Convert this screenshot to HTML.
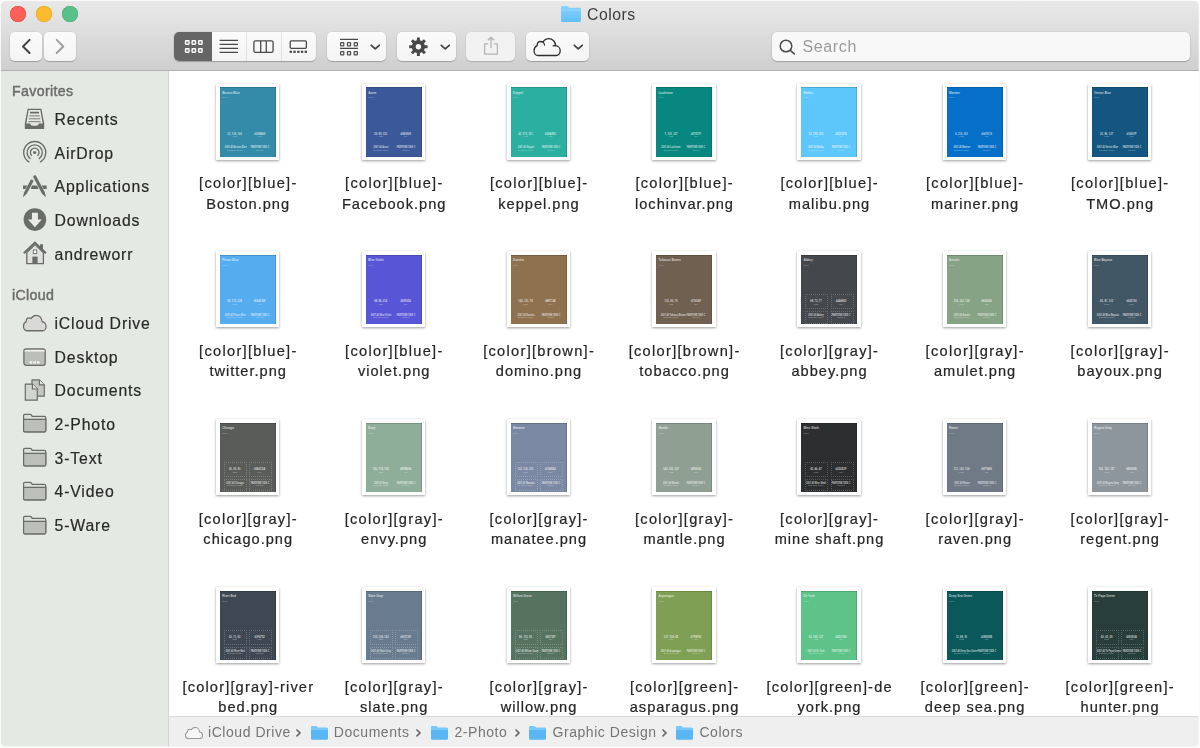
<!DOCTYPE html>
<html lang="en">
<head>
<meta charset="utf-8">
<title>Colors</title>
<style>
*{box-sizing:border-box;margin:0;padding:0}
html,body{width:1200px;height:748px;overflow:hidden;background:#fbfbfb;font-family:"Liberation Sans",sans-serif;color:#2a2a2a}
#win{position:absolute;left:0;top:0;width:1200px;height:748px;overflow:hidden;background:#fff;clip-path:inset(.9px 1.3px 1.5px .9px round 4.5px)}
#tb{position:absolute;left:0;top:0;width:1200px;height:71px;background:linear-gradient(#e8e8e8 1px,#e1e1e1 22px,#cfcfcf 70px);border-bottom:1px solid #b1b1b1}
.tl{position:absolute;top:5.8px;width:16px;height:16px;border-radius:50%}
.btn{position:absolute;top:32px;height:29px;border-radius:5px;background:linear-gradient(#fbfbfb,#f4f4f4);box-shadow:0 1px 1px rgba(0,0,0,.22),0 0 0 .5px rgba(0,0,0,.07)}
.btn svg{position:absolute;left:0;top:0}
#title{position:absolute;left:587px;top:5.2px;font-size:15.8px;line-height:20px;letter-spacing:.5px;color:#3c3c3c}
#search{position:absolute;left:772px;top:32px;width:418px;height:29px;border-radius:5px;background:#f8f8f8;box-shadow:0 1px 1px rgba(0,0,0,.2),0 0 0 .5px rgba(0,0,0,.08)}
#search span{position:absolute;left:30.6px;top:5.4px;font-size:16px;line-height:20px;color:#9a9a9a;letter-spacing:.6px}
#sb{position:absolute;left:0;top:71px;width:169px;height:677px;background:#e5e9e3;border-right:1px solid #d3d5d1}
.sh{position:absolute;left:12px;font-size:14.2px;line-height:16px;color:#6c6c6c;-webkit-text-stroke:.45px #6c6c6c;letter-spacing:.35px}
.si{position:absolute;left:54.5px;font-size:15.8px;line-height:20px;color:#2a2a2a;letter-spacing:.85px;margin-top:.9px;-webkit-text-stroke:.2px #2a2a2a;white-space:nowrap}
.ic{position:absolute;left:22px;width:26px;height:26px}
#main{position:absolute;left:169px;top:71px;width:1031px;height:645px;background:#fff;overflow:hidden}
#cells{position:absolute;left:-169px;top:-71px}
.cell{position:absolute;width:145px;height:140px}
.fr{position:absolute;left:40.75px;top:0;width:63.5px;height:76px;background:#fff;box-shadow:0 1px 2.5px rgba(0,0,0,.38),0 0 .5px rgba(0,0,0,.3)}
.sw{position:absolute;left:3.75px;top:3.5px;width:56.25px;height:69.5px;overflow:hidden;box-shadow:inset 0 .6px 0 rgba(0,0,0,.3),inset -.6px 0 0 rgba(0,0,0,.22);color:rgba(255,255,255,.7);font-size:2.6px;line-height:3px;white-space:nowrap}
.sw span{position:absolute}
.sw i{position:absolute;width:23px;height:15px;border:.6px dotted rgba(255,255,255,.2)}
.sw .t1{left:2.5px;top:4.5px;font-size:3px;font-weight:bold}
.sw .t2{left:2.5px;top:9px;font-size:2.2px;opacity:.7}
.sw .v{top:45.5px;font-weight:bold;width:24px;text-align:center}
.sw .k{top:47.8px;font-size:2.1px;opacity:.75;width:24px;text-align:center}
.sw .a{left:3px}.sw .b{left:28px}
.sw .v.c{top:59.3px;transform:scaleX(.86)}.sw .k.c{top:61.6px}
.lb{position:absolute;left:-10px;top:89.5px;width:165px;text-align:center;font-size:14.6px;line-height:20.4px;color:#262626;-webkit-text-stroke:.22px #262626;white-space:nowrap}
.l1{letter-spacing:1.3px;margin-right:-1.3px}
.l2{letter-spacing:1px;margin-right:-1px}
#pb{position:absolute;left:169px;top:716px;width:1031px;height:32px;background:#efefef;border-top:1px solid #d9d9d9}
#pb span{position:absolute;top:7px;font-size:14px;line-height:16px;color:#757575;letter-spacing:.55px;white-space:nowrap}
#pb i{position:absolute;top:7px;font-style:normal;font-weight:bold;font-size:13px;line-height:16px;color:#6a6a6a}
#pb svg{position:absolute}
.sh,.si,.lb,#title,#search span,#pb span{will-change:opacity}
</style>
</head>
<body>
<div id="win">
<div id="tb">
<div class="tl" style="left:10px;background:#fc5f57;box-shadow:inset 0 0 0 .5px #df4a43"></div>
<div class="tl" style="left:36px;background:#fdbc2e;box-shadow:inset 0 0 0 .5px #dea123"></div>
<div class="tl" style="left:62px;background:#5ac08a;box-shadow:inset 0 0 0 .5px #4aa873"></div>
<svg style="position:absolute;left:561px;top:6px" width="20" height="16" viewBox="0 0 20 16"><defs><linearGradient id="fg" x1="0" y1="0" x2="0" y2="1"><stop offset="0" stop-color="#86d2fb"/><stop offset="1" stop-color="#62bff6"/></linearGradient></defs><path d="M0 1.4Q0 0 1.4 0H5.8Q6.8 0 7.4 .9L8 1.8H18.6Q20 1.8 20 3.2V14.6Q20 16 18.6 16H1.4Q0 16 0 14.6Z" fill="url(#fg)"/><path d="M0 4.2H20" stroke="#9adafc" stroke-width=".8"/></svg>
<div id="title">Colors</div>
<div class="btn" style="left:10px;width:32px"><svg width="32" height="29" viewBox="0 0 32 29"><path d="M19.6 7.9 L13 14.45 L19.6 21" fill="none" stroke="#404040" stroke-width="2" stroke-linecap="round" stroke-linejoin="round"/></svg></div>
<div class="btn" style="left:44px;width:32px"><svg width="32" height="29" viewBox="0 0 32 29"><path d="M12.7 7.9 L19.3 14.45 L12.7 21" fill="none" stroke="#a0a0a0" stroke-width="2" stroke-linecap="round" stroke-linejoin="round"/></svg></div>
<div class="btn" style="left:174px;width:142px;overflow:hidden"><div style="position:absolute;left:0;top:0;width:37.7px;height:29px;background:#656565"></div><div style="position:absolute;left:72.2px;top:0;width:1px;height:29px;background:#e2e2e2"></div><div style="position:absolute;left:106.6px;top:0;width:1px;height:29px;background:#e2e2e2"></div><svg width="142" height="29" viewBox="0 0 142 29"><rect x="11.55" y="8.75" width="3.40" height="3.40" rx=".6" fill="none" stroke="#fff" stroke-width="1.5"/><rect x="18.10" y="8.75" width="3.40" height="3.40" rx=".6" fill="none" stroke="#fff" stroke-width="1.5"/><rect x="24.65" y="8.75" width="3.40" height="3.40" rx=".6" fill="none" stroke="#fff" stroke-width="1.5"/><rect x="11.55" y="16.75" width="3.40" height="3.40" rx=".6" fill="none" stroke="#fff" stroke-width="1.5"/><rect x="18.10" y="16.75" width="3.40" height="3.40" rx=".6" fill="none" stroke="#fff" stroke-width="1.5"/><rect x="24.65" y="16.75" width="3.40" height="3.40" rx=".6" fill="none" stroke="#fff" stroke-width="1.5"/><path d="M45.6 8.4H64" stroke="#4a4a4a" stroke-width="1.2"/><path d="M45.6 12.4H64" stroke="#4a4a4a" stroke-width="1.2"/><path d="M45.6 16.4H64" stroke="#4a4a4a" stroke-width="1.2"/><path d="M45.6 20.4H64" stroke="#4a4a4a" stroke-width="1.2"/><rect x="79.9" y="8.9" width="19.2" height="11.4" rx="1.6" fill="none" stroke="#4a4a4a" stroke-width="1.3"/><path d="M86.7 9V20M92.3 9V20" stroke="#4a4a4a" stroke-width="1.3"/><rect x="116.2" y="8.9" width="16.2" height="7.4" rx="1" fill="none" stroke="#4a4a4a" stroke-width="1.3"/><rect x="115.60" y="18.7" width="2.4" height="2.2" fill="#4a4a4a"/><rect x="119.35" y="18.7" width="2.4" height="2.2" fill="#4a4a4a"/><rect x="123.10" y="18.7" width="2.4" height="2.2" fill="#4a4a4a"/><rect x="126.85" y="18.7" width="2.4" height="2.2" fill="#4a4a4a"/><rect x="130.60" y="18.7" width="2.4" height="2.2" fill="#4a4a4a"/></svg></div>
<div class="btn" style="left:327px;width:59px"><svg width="40" height="29" viewBox="0 0 40 29"><path d="M13 7.4H31M13 16.4H31" stroke="#4a4a4a" stroke-width="1.2"/><rect x="13.60" y="10.60" width="3.20" height="3.20" rx=".6" fill="none" stroke="#4a4a4a" stroke-width="1.2"/><rect x="20.40" y="10.60" width="3.20" height="3.20" rx=".6" fill="none" stroke="#4a4a4a" stroke-width="1.2"/><rect x="27.20" y="10.60" width="3.20" height="3.20" rx=".6" fill="none" stroke="#4a4a4a" stroke-width="1.2"/><rect x="13.60" y="19.60" width="3.20" height="3.20" rx=".6" fill="none" stroke="#4a4a4a" stroke-width="1.2"/><rect x="20.40" y="19.60" width="3.20" height="3.20" rx=".6" fill="none" stroke="#4a4a4a" stroke-width="1.2"/><rect x="27.20" y="19.60" width="3.20" height="3.20" rx=".6" fill="none" stroke="#4a4a4a" stroke-width="1.2"/></svg><svg width="12" height="8" style="left:42.5px;top:12px" viewBox="0 0 12 8"><path d="M1.3 1.3 L5.25 4.9 L9.2 1.3" fill="none" stroke="#454545" stroke-width="1.8" stroke-linecap="round" stroke-linejoin="round"/></svg></div>
<div class="btn" style="left:397px;width:59px"><svg width="40" height="29" viewBox="0 0 40 29"><path fill-rule="evenodd" fill="#484848" d="M19.86 8.28 L19.95 5.51 L22.85 5.51 L22.94 8.28 L24.85 9.07 L26.87 7.18 L28.92 9.23 L27.03 11.25 L27.82 13.16 L30.59 13.25 L30.59 16.15 L27.82 16.24 L27.03 18.15 L28.92 20.17 L26.87 22.22 L24.85 20.33 L22.94 21.12 L22.85 23.89 L19.95 23.89 L19.86 21.12 L17.95 20.33 L15.93 22.22 L13.88 20.17 L15.77 18.15 L14.98 16.24 L12.21 16.15 L12.21 13.25 L14.98 13.16 L15.77 11.25 L13.88 9.23 L15.93 7.18 L17.95 9.07Z M24.10 14.70 A2.7 2.7 0 1 0 18.70 14.70 A2.7 2.7 0 1 0 24.10 14.70Z"/></svg><svg width="12" height="8" style="left:42.8px;top:12px" viewBox="0 0 12 8"><path d="M1.3 1.3 L5.25 4.9 L9.2 1.3" fill="none" stroke="#454545" stroke-width="1.8" stroke-linecap="round" stroke-linejoin="round"/></svg></div>
<div class="btn" style="left:466px;width:49px;background:#f2f2f2;box-shadow:0 1px 1px rgba(0,0,0,.15),0 0 0 .5px rgba(0,0,0,.05)"><svg width="49" height="29" viewBox="0 0 49 29"><path d="M22.2 11.9H18.6V22.1H31.4V11.9H27.8" fill="none" stroke="#b4b4b4" stroke-width="1.3"/><path d="M25 16.2V5.4M21.9 8.3L25 5.2L28.1 8.3" fill="none" stroke="#b4b4b4" stroke-width="1.3"/></svg></div>
<div class="btn" style="left:526px;width:63px"><svg width="44" height="29" viewBox="0 0 44 29"><g transform="translate(7.4,6) scale(.957,.95)"><path d="M4.9 18.4C2.3 18.4 .7 15.9 .7 13.3C.7 10.9 2.1 8.9 3.9 8C3.9 5.7 5.3 3.7 7.5 3.7C8.5 3.7 9.4 3.9 10.1 4.3C11.3 2.1 13.5 .7 16.2 .7C20 .7 23.1 3.9 23.2 8.1C25.9 8.3 28 10.7 28 13.4C28 16.1 26.2 18.4 23.8 18.4Z" fill="none" stroke="#303030" stroke-width="1.4" stroke-linejoin="round"/><path d="M10.1 4.3C10.9 5.1 11.5 6.3 11.7 7.5M23.2 8.1C22.3 8 21.4 8.1 20.6 8.3" fill="none" stroke="#303030" stroke-width="1.2" stroke-linecap="round"/></g></svg><svg width="12" height="8" style="left:46.8px;top:12px" viewBox="0 0 12 8"><path d="M1.3 1.3 L5.25 4.9 L9.2 1.3" fill="none" stroke="#454545" stroke-width="1.8" stroke-linecap="round" stroke-linejoin="round"/></svg></div>
<div id="search"><svg style="position:absolute;left:6px;top:6px" width="20" height="20" viewBox="0 0 20 20"><circle cx="8" cy="8" r="5.8" fill="none" stroke="#4c4c4c" stroke-width="1.5"/><path d="M12.3 12.4L16.3 15.9" stroke="#4c4c4c" stroke-width="1.6" stroke-linecap="round"/></svg><span>Search</span></div>
</div>
<div id="sb">
<div class="sh" style="top:11.5px">Favorites</div>
<div class="si" style="top:38.3px">Recents</div>
<div class="si" style="top:71.9px">AirDrop</div>
<div class="si" style="top:105.5px">Applications</div>
<div class="si" style="top:139.1px">Downloads</div>
<div class="si" style="top:172.7px">andreworr</div>
<div class="sh" style="top:216px">iCloud</div>
<div class="si" style="top:242.3px">iCloud Drive</div>
<div class="si" style="top:275.9px">Desktop</div>
<div class="si" style="top:309.5px">Documents</div>
<div class="si" style="top:343.1px">2-Photo</div>
<div class="si" style="top:376.7px">3-Text</div>
<div class="si" style="top:410.3px">4-Video</div>
<div class="si" style="top:443.9px">5-Ware</div>
<svg class="ic" style="top:34.5px" viewBox="0 0 26 26"><path d="M5.6 2.8H19.4L22.2 17.4V22.2Q22.2 23.1 21.3 23.1H3.7Q2.8 23.1 2.8 22.2V17.4Z" fill="#6a6c69"/><path d="M6.7 4H18.3L20.7 17.5H16.8Q16.4 19.7 14.2 19.7H10.8Q8.6 19.7 8.2 17.5H4.3Z" fill="#e6e8e5"/><path d="M8 6.6H17" stroke="#6a6c69" stroke-width="1.6"/><path d="M7.2 9.9H17.8M6.8 12.8H18.2M6.4 15.7H18.6" stroke="#6a6c69" stroke-width=".9"/></svg>
<svg class="ic" style="top:68.4px" viewBox="0 0 26 26"><path d="M7.37 23.12A11 11 0 1 1 18.03 23.12 M8.56 19.87A7.6 7.6 0 1 1 16.84 19.87 M9.94 16.79A4.3 4.3 0 1 1 15.46 16.79" fill="none" stroke="#6a6c69" stroke-width="1.35"/><circle cx="12.7" cy="13.5" r="1.6" fill="#6a6c69"/></svg>
<svg class="ic" style="top:101.5px" viewBox="0 0 26 26"><path d="M11.1 3.8Q11.6 2 13.8 2.4L22.7 18.9L24 24.5L19.9 20.4Z" fill="#6a6c69"/><path d="M8.9 6.6Q10.6 5.8 11.6 8L4.7 20.8L.9 24.4L2 19.4Z" fill="#6a6c69"/><path d="M1 12.5H5.3L3.4 16.1H1ZM9.9 12.5H15.2L16.5 16.1H8.8ZM19.6 12.5H24.7V16.1H21.5Z" fill="#6a6c69"/></svg>
<svg class="ic" style="top:135.4px" viewBox="0 0 26 26"><circle cx="12.9" cy="13.6" r="11.3" fill="#6a6c69"/><path d="M9.9 6.8H15.9V13.4H19.8L12.9 21.2L6 13.4H9.9Z" fill="#e9ece7"/></svg>
<svg class="ic" style="top:168.5px" viewBox="0 0 26 26"><path d="M4.8 12.6V23.6H21.4V12.6L13 4.6Z" fill="#dfe1de" stroke="#6a6c69" stroke-width="1.3"/><path d="M1.8 13.2L12.9 2.6L24 13.2" fill="none" stroke="#6a6c69" stroke-width="2" stroke-linejoin="miter"/><path d="M18 4.2H21V10L18 7.4Z" fill="#6a6c69"/><rect x="10.4" y="16.6" width="5.2" height="7" fill="#6a6c69"/><rect x="11.3" y="10" width="3.4" height="3.6" fill="#fff" stroke="#6a6c69" stroke-width=".9"/></svg>
<svg class="ic" style="top:238.5px" viewBox="0 0 26 26"><g transform="translate(.9,4.7) scale(.828,.872)"><path d="M4.9 18.4C2.3 18.4 .7 15.9 .7 13.3C.7 10.9 2.1 8.9 3.9 8C3.9 5.7 5.3 3.7 7.5 3.7C8.5 3.7 9.4 3.9 10.1 4.3C11.3 2.1 13.5 .7 16.2 .7C20 .7 23.1 3.9 23.2 8.1C25.9 8.3 28 10.7 28 13.4C28 16.1 26.2 18.4 23.8 18.4Z" fill="#d9dad8" stroke="#6a6c69" stroke-width="1.5" stroke-linejoin="round"/></g></svg>
<svg class="ic" style="top:272.5px" viewBox="0 0 26 26"><rect x="1.9" y="4.9" width="21.3" height="16.4" rx="2.2" fill="#bcbeba" stroke="#6a6c69" stroke-width="1.3"/><path d="M2.6 6.7H22.6" stroke="#f1f2f0" stroke-width="1.6"/><rect x="7.6" y="17.2" width="2.6" height="2.4" fill="#f1f2f0"/><rect x="11.3" y="17.2" width="2.6" height="2.4" fill="#f1f2f0"/><rect x="15" y="17.2" width="2.6" height="2.4" fill="#f1f2f0"/></svg>
<svg class="ic" style="top:306.0px" viewBox="0 0 26 26"><path d="M10 2.9H17.4L22.3 7.8V19.1H10Z" fill="#c3c5c1" stroke="#6a6c69" stroke-width="1.2" stroke-linejoin="round"/><path d="M17.4 2.9V7.8H22.3" fill="#dfe1de" stroke="#6a6c69" stroke-width="1.2" stroke-linejoin="round"/><path d="M3.3 7.1H10.4L15.3 12V23.2H3.3Z" fill="#d3d5d1" stroke="#6a6c69" stroke-width="1.2" stroke-linejoin="round"/><path d="M10.4 7.1V12H15.3" fill="#e6e8e5" stroke="#6a6c69" stroke-width="1.2" stroke-linejoin="round"/></svg>
<svg class="ic" style="top:339.3px" viewBox="0 0 26 26"><path d="M1.6 5.6Q1.6 4.3 2.9 4.3H8.2Q9 4.3 9.5 5.1L10.2 6.4H22.5Q23.8 6.4 23.8 7.7V20.5Q23.8 21.8 22.5 21.8H2.9Q1.6 21.8 1.6 20.5Z" fill="#dcdedb" stroke="#6a6c69" stroke-width="1.2"/><path d="M1.6 9.3H23.8V20.5Q23.8 21.8 22.5 21.8H2.9Q1.6 21.8 1.6 20.5Z" fill="#bdbfbb" stroke="#6a6c69" stroke-width="1.2"/></svg>
<svg class="ic" style="top:373.3px" viewBox="0 0 26 26"><path d="M1.6 5.6Q1.6 4.3 2.9 4.3H8.2Q9 4.3 9.5 5.1L10.2 6.4H22.5Q23.8 6.4 23.8 7.7V20.5Q23.8 21.8 22.5 21.8H2.9Q1.6 21.8 1.6 20.5Z" fill="#dcdedb" stroke="#6a6c69" stroke-width="1.2"/><path d="M1.6 9.3H23.8V20.5Q23.8 21.8 22.5 21.8H2.9Q1.6 21.8 1.6 20.5Z" fill="#bdbfbb" stroke="#6a6c69" stroke-width="1.2"/></svg>
<svg class="ic" style="top:406.6px" viewBox="0 0 26 26"><path d="M1.6 5.6Q1.6 4.3 2.9 4.3H8.2Q9 4.3 9.5 5.1L10.2 6.4H22.5Q23.8 6.4 23.8 7.7V20.5Q23.8 21.8 22.5 21.8H2.9Q1.6 21.8 1.6 20.5Z" fill="#dcdedb" stroke="#6a6c69" stroke-width="1.2"/><path d="M1.6 9.3H23.8V20.5Q23.8 21.8 22.5 21.8H2.9Q1.6 21.8 1.6 20.5Z" fill="#bdbfbb" stroke="#6a6c69" stroke-width="1.2"/></svg>
<svg class="ic" style="top:440.6px" viewBox="0 0 26 26"><path d="M1.6 5.6Q1.6 4.3 2.9 4.3H8.2Q9 4.3 9.5 5.1L10.2 6.4H22.5Q23.8 6.4 23.8 7.7V20.5Q23.8 21.8 22.5 21.8H2.9Q1.6 21.8 1.6 20.5Z" fill="#dcdedb" stroke="#6a6c69" stroke-width="1.2"/><path d="M1.6 9.3H23.8V20.5Q23.8 21.8 22.5 21.8H2.9Q1.6 21.8 1.6 20.5Z" fill="#bdbfbb" stroke="#6a6c69" stroke-width="1.2"/></svg>
</div>
<div id="main"><div id="cells">
<div class="cell" style="left:175.20px;top:83.60px">
<div class="fr"><div class="sw" style="background:#338BA9"><span class="t1">Boston Blue</span><span class="t2">Color</span><span class="v a">51, 139, 169</span><span class="k a">RGB</span><span class="v b">#338BA9</span><span class="k b">HEX</span><span class="v c a">2067-40 Boston Blue</span><span class="k c a">Benjamin Moore</span><span class="v c b">PANTONE 7459 C</span><span class="k c b">Pantone</span></div></div>
<div class="lb"><span class="l1">[color][blue]-</span><br><span class="l2">Boston.png</span></div>
</div>
<div class="cell" style="left:321.20px;top:83.60px">
<div class="fr"><div class="sw" style="background:#3B5998"><span class="t1">Azure</span><span class="t2">Color</span><span class="v a">59, 89, 152</span><span class="k a">RGB</span><span class="v b">#3B5998</span><span class="k b">HEX</span><span class="v c a">2067-40 Azure</span><span class="k c a">Benjamin Moore</span><span class="v c b">PANTONE 7459 C</span><span class="k c b">Pantone</span></div></div>
<div class="lb"><span class="l1">[color][blue]-</span><br><span class="l2">Facebook.png</span></div>
</div>
<div class="cell" style="left:466.00px;top:83.60px">
<div class="fr"><div class="sw" style="background:#2AAFA1"><span class="t1">Keppel</span><span class="t2">Color</span><span class="v a">42, 175, 161</span><span class="k a">RGB</span><span class="v b">#2AAFA1</span><span class="k b">HEX</span><span class="v c a">2067-40 Keppel</span><span class="k c a">Benjamin Moore</span><span class="v c b">PANTONE 7459 C</span><span class="k c b">Pantone</span></div></div>
<div class="lb"><span class="l1">[color][blue]-</span><br><span class="l2">keppel.png</span></div>
</div>
<div class="cell" style="left:611.50px;top:83.60px">
<div class="fr"><div class="sw" style="background:#07877F"><span class="t1">Lochinvar</span><span class="t2">Color</span><span class="v a">7, 135, 127</span><span class="k a">RGB</span><span class="v b">#07877F</span><span class="k b">HEX</span><span class="v c a">2067-40 Lochinvar</span><span class="k c a">Benjamin Moore</span><span class="v c b">PANTONE 7459 C</span><span class="k c b">Pantone</span></div></div>
<div class="lb"><span class="l1">[color][blue]-</span><br><span class="l2">lochinvar.png</span></div>
</div>
<div class="cell" style="left:756.50px;top:83.60px">
<div class="fr"><div class="sw" style="background:#5DC6FA"><span class="t1">Malibu</span><span class="t2">Color</span><span class="v a">93, 198, 250</span><span class="k a">RGB</span><span class="v b">#5DC6FA</span><span class="k b">HEX</span><span class="v c a">2067-40 Malibu</span><span class="k c a">Benjamin Moore</span><span class="v c b">PANTONE 7459 C</span><span class="k c b">Pantone</span></div></div>
<div class="lb"><span class="l1">[color][blue]-</span><br><span class="l2">malibu.png</span></div>
</div>
<div class="cell" style="left:902.10px;top:83.60px">
<div class="fr"><div class="sw" style="background:#0670C9"><span class="t1">Mariner</span><span class="t2">Color</span><span class="v a">6, 112, 201</span><span class="k a">RGB</span><span class="v b">#0670C9</span><span class="k b">HEX</span><span class="v c a">2067-40 Mariner</span><span class="k c a">Benjamin Moore</span><span class="v c b">PANTONE 7459 C</span><span class="k c b">Pantone</span></div></div>
<div class="lb"><span class="l1">[color][blue]-</span><br><span class="l2">mariner.png</span></div>
</div>
<div class="cell" style="left:1047.10px;top:83.60px">
<div class="fr"><div class="sw" style="background:#14567F"><span class="t1">Venice Blue</span><span class="t2">Color</span><span class="v a">20, 86, 127</span><span class="k a">RGB</span><span class="v b">#14567F</span><span class="k b">HEX</span><span class="v c a">2067-40 Venice Blue</span><span class="k c a">Benjamin Moore</span><span class="v c b">PANTONE 7459 C</span><span class="k c b">Pantone</span></div></div>
<div class="lb"><span class="l1">[color][blue]-</span><br><span class="l2">TMO.png</span></div>
</div>
<div class="cell" style="left:175.20px;top:251.40px">
<div class="fr"><div class="sw" style="background:#55ACEE"><span class="t1">Picton Blue</span><span class="t2">Color</span><span class="v a">85, 172, 238</span><span class="k a">RGB</span><span class="v b">#55ACEE</span><span class="k b">HEX</span><span class="v c a">2067-40 Picton Blue</span><span class="k c a">Benjamin Moore</span><span class="v c b">PANTONE 7459 C</span><span class="k c b">Pantone</span></div></div>
<div class="lb"><span class="l1">[color][blue]-</span><br><span class="l2">twitter.png</span></div>
</div>
<div class="cell" style="left:321.20px;top:251.40px">
<div class="fr"><div class="sw" style="background:#5856D6"><span class="t1">Blue Violet</span><span class="t2">Color</span><span class="v a">88, 86, 214</span><span class="k a">RGB</span><span class="v b">#5856D6</span><span class="k b">HEX</span><span class="v c a">2067-40 Blue Violet</span><span class="k c a">Benjamin Moore</span><span class="v c b">PANTONE 7459 C</span><span class="k c b">Pantone</span></div></div>
<div class="lb"><span class="l1">[color][blue]-</span><br><span class="l2">violet.png</span></div>
</div>
<div class="cell" style="left:466.00px;top:251.40px">
<div class="fr"><div class="sw" style="background:#8E714E"><span class="t1">Domino</span><span class="t2">Color</span><span class="v a">142, 113, 78</span><span class="k a">RGB</span><span class="v b">#8E714E</span><span class="k b">HEX</span><span class="v c a">2067-40 Domino</span><span class="k c a">Benjamin Moore</span><span class="v c b">PANTONE 7459 C</span><span class="k c b">Pantone</span></div></div>
<div class="lb"><span class="l1">[color][brown]-</span><br><span class="l2">domino.png</span></div>
</div>
<div class="cell" style="left:611.50px;top:251.40px">
<div class="fr"><div class="sw" style="background:#70604F"><span class="t1">Tobacco Brown</span><span class="t2">Color</span><span class="v a">112, 96, 79</span><span class="k a">RGB</span><span class="v b">#70604F</span><span class="k b">HEX</span><span class="v c a">2067-40 Tobacco Brown</span><span class="k c a">Benjamin Moore</span><span class="v c b">PANTONE 7459 C</span><span class="k c b">Pantone</span></div></div>
<div class="lb"><span class="l1">[color][brown]-</span><br><span class="l2">tobacco.png</span></div>
</div>
<div class="cell" style="left:756.50px;top:251.40px">
<div class="fr"><div class="sw" style="background:#44484D"><span class="t1">Abbey</span><span class="t2">Color</span><span class="v a">68, 72, 77</span><span class="k a">RGB</span><span class="v b">#44484D</span><span class="k b">HEX</span><span class="v c a">2067-40 Abbey</span><span class="k c a">Benjamin Moore</span><span class="v c b">PANTONE 7459 C</span><span class="k c b">Pantone</span><i style="left:4.2px;top:39.5px"></i><i style="left:29.7px;top:39.5px"></i><i style="left:4.2px;top:56.2px;height:12.5px"></i><i style="left:29.7px;top:56.2px;height:12.5px"></i></div></div>
<div class="lb"><span class="l1">[color][gray]-</span><br><span class="l2">abbey.png</span></div>
</div>
<div class="cell" style="left:902.10px;top:251.40px">
<div class="fr"><div class="sw" style="background:#86A386"><span class="t1">Amulet</span><span class="t2">Color</span><span class="v a">134, 163, 134</span><span class="k a">RGB</span><span class="v b">#86A386</span><span class="k b">HEX</span><span class="v c a">2067-40 Amulet</span><span class="k c a">Benjamin Moore</span><span class="v c b">PANTONE 7459 C</span><span class="k c b">Pantone</span></div></div>
<div class="lb"><span class="l1">[color][gray]-</span><br><span class="l2">amulet.png</span></div>
</div>
<div class="cell" style="left:1047.10px;top:251.40px">
<div class="fr"><div class="sw" style="background:#425766"><span class="t1">Blue Bayoux</span><span class="t2">Color</span><span class="v a">66, 87, 102</span><span class="k a">RGB</span><span class="v b">#425766</span><span class="k b">HEX</span><span class="v c a">2067-40 Blue Bayoux</span><span class="k c a">Benjamin Moore</span><span class="v c b">PANTONE 7459 C</span><span class="k c b">Pantone</span></div></div>
<div class="lb"><span class="l1">[color][gray]-</span><br><span class="l2">bayoux.png</span></div>
</div>
<div class="cell" style="left:175.20px;top:419.30px">
<div class="fr"><div class="sw" style="background:#5A5C5A"><span class="t1">Chicago</span><span class="t2">Color</span><span class="v a">90, 92, 90</span><span class="k a">RGB</span><span class="v b">#5A5C5A</span><span class="k b">HEX</span><span class="v c a">2067-40 Chicago</span><span class="k c a">Benjamin Moore</span><span class="v c b">PANTONE 7459 C</span><span class="k c b">Pantone</span><i style="left:4.2px;top:39.5px"></i><i style="left:29.7px;top:39.5px"></i><i style="left:4.2px;top:56.2px;height:12.5px"></i><i style="left:29.7px;top:56.2px;height:12.5px"></i></div></div>
<div class="lb"><span class="l1">[color][gray]-</span><br><span class="l2">chicago.png</span></div>
</div>
<div class="cell" style="left:321.20px;top:419.30px">
<div class="fr"><div class="sw" style="background:#8FAE9A"><span class="t1">Envy</span><span class="t2">Color</span><span class="v a">143, 174, 154</span><span class="k a">RGB</span><span class="v b">#8FAE9A</span><span class="k b">HEX</span><span class="v c a">2067-40 Envy</span><span class="k c a">Benjamin Moore</span><span class="v c b">PANTONE 7459 C</span><span class="k c b">Pantone</span></div></div>
<div class="lb"><span class="l1">[color][gray]-</span><br><span class="l2">envy.png</span></div>
</div>
<div class="cell" style="left:466.00px;top:419.30px">
<div class="fr"><div class="sw" style="background:#7A88A3"><span class="t1">Manatee</span><span class="t2">Color</span><span class="v a">122, 136, 163</span><span class="k a">RGB</span><span class="v b">#7A88A3</span><span class="k b">HEX</span><span class="v c a">2067-40 Manatee</span><span class="k c a">Benjamin Moore</span><span class="v c b">PANTONE 7459 C</span><span class="k c b">Pantone</span><i style="left:4.2px;top:39.5px"></i><i style="left:29.7px;top:39.5px"></i><i style="left:4.2px;top:56.2px;height:12.5px"></i><i style="left:29.7px;top:56.2px;height:12.5px"></i></div></div>
<div class="lb"><span class="l1">[color][gray]-</span><br><span class="l2">manatee.png</span></div>
</div>
<div class="cell" style="left:611.50px;top:419.30px">
<div class="fr"><div class="sw" style="background:#8FA093"><span class="t1">Mantle</span><span class="t2">Color</span><span class="v a">143, 160, 147</span><span class="k a">RGB</span><span class="v b">#8FA093</span><span class="k b">HEX</span><span class="v c a">2067-40 Mantle</span><span class="k c a">Benjamin Moore</span><span class="v c b">PANTONE 7459 C</span><span class="k c b">Pantone</span></div></div>
<div class="lb"><span class="l1">[color][gray]-</span><br><span class="l2">mantle.png</span></div>
</div>
<div class="cell" style="left:756.50px;top:419.30px">
<div class="fr"><div class="sw" style="background:#2D2E2F"><span class="t1">Mine Shaft</span><span class="t2">Color</span><span class="v a">45, 46, 47</span><span class="k a">RGB</span><span class="v b">#2D2E2F</span><span class="k b">HEX</span><span class="v c a">2067-40 Mine Shaft</span><span class="k c a">Benjamin Moore</span><span class="v c b">PANTONE 7459 C</span><span class="k c b">Pantone</span><i style="left:4.2px;top:39.5px"></i><i style="left:29.7px;top:39.5px"></i><i style="left:4.2px;top:56.2px;height:12.5px"></i><i style="left:29.7px;top:56.2px;height:12.5px"></i></div></div>
<div class="lb"><span class="l1">[color][gray]-</span><br><span class="l2">mine shaft.png</span></div>
</div>
<div class="cell" style="left:902.10px;top:419.30px">
<div class="fr"><div class="sw" style="background:#6F7A86"><span class="t1">Raven</span><span class="t2">Color</span><span class="v a">111, 122, 134</span><span class="k a">RGB</span><span class="v b">#6F7A86</span><span class="k b">HEX</span><span class="v c a">2067-40 Raven</span><span class="k c a">Benjamin Moore</span><span class="v c b">PANTONE 7459 C</span><span class="k c b">Pantone</span></div></div>
<div class="lb"><span class="l1">[color][gray]-</span><br><span class="l2">raven.png</span></div>
</div>
<div class="cell" style="left:1047.10px;top:419.30px">
<div class="fr"><div class="sw" style="background:#8E969D"><span class="t1">Regent Gray</span><span class="t2">Color</span><span class="v a">142, 150, 157</span><span class="k a">RGB</span><span class="v b">#8E969D</span><span class="k b">HEX</span><span class="v c a">2067-40 Regent Gray</span><span class="k c a">Benjamin Moore</span><span class="v c b">PANTONE 7459 C</span><span class="k c b">Pantone</span></div></div>
<div class="lb"><span class="l1">[color][gray]-</span><br><span class="l2">regent.png</span></div>
</div>
<div class="cell" style="left:175.20px;top:587.00px">
<div class="fr"><div class="sw" style="background:#3F4752"><span class="t1">River Bed</span><span class="t2">Color</span><span class="v a">63, 71, 82</span><span class="k a">RGB</span><span class="v b">#3F4752</span><span class="k b">HEX</span><span class="v c a">2067-40 River Bed</span><span class="k c a">Benjamin Moore</span><span class="v c b">PANTONE 7459 C</span><span class="k c b">Pantone</span><i style="left:4.2px;top:39.5px"></i><i style="left:29.7px;top:39.5px"></i><i style="left:4.2px;top:56.2px;height:12.5px"></i><i style="left:29.7px;top:56.2px;height:12.5px"></i></div></div>
<div class="lb"><span class="l1" style="letter-spacing:1.17px">[color][gray]-river</span><br><span class="l2">bed.png</span></div>
</div>
<div class="cell" style="left:321.20px;top:587.00px">
<div class="fr"><div class="sw" style="background:#697C8F"><span class="t1">Slate Gray</span><span class="t2">Color</span><span class="v a">105, 124, 143</span><span class="k a">RGB</span><span class="v b">#697C8F</span><span class="k b">HEX</span><span class="v c a">2067-40 Slate Gray</span><span class="k c a">Benjamin Moore</span><span class="v c b">PANTONE 7459 C</span><span class="k c b">Pantone</span><i style="left:4.2px;top:39.5px"></i><i style="left:29.7px;top:39.5px"></i><i style="left:4.2px;top:56.2px;height:12.5px"></i><i style="left:29.7px;top:56.2px;height:12.5px"></i></div></div>
<div class="lb"><span class="l1">[color][gray]-</span><br><span class="l2">slate.png</span></div>
</div>
<div class="cell" style="left:466.00px;top:587.00px">
<div class="fr"><div class="sw" style="background:#56735F"><span class="t1">Willow Grove</span><span class="t2">Color</span><span class="v a">86, 115, 95</span><span class="k a">RGB</span><span class="v b">#56735F</span><span class="k b">HEX</span><span class="v c a">2067-40 Willow Grove</span><span class="k c a">Benjamin Moore</span><span class="v c b">PANTONE 7459 C</span><span class="k c b">Pantone</span><i style="left:4.2px;top:39.5px"></i><i style="left:29.7px;top:39.5px"></i><i style="left:4.2px;top:56.2px;height:12.5px"></i><i style="left:29.7px;top:56.2px;height:12.5px"></i></div></div>
<div class="lb"><span class="l1">[color][gray]-</span><br><span class="l2">willow.png</span></div>
</div>
<div class="cell" style="left:611.50px;top:587.00px">
<div class="fr"><div class="sw" style="background:#7F9F55"><span class="t1">Asparagus</span><span class="t2">Color</span><span class="v a">127, 159, 85</span><span class="k a">RGB</span><span class="v b">#7F9F55</span><span class="k b">HEX</span><span class="v c a">2067-40 Asparagus</span><span class="k c a">Benjamin Moore</span><span class="v c b">PANTONE 7459 C</span><span class="k c b">Pantone</span></div></div>
<div class="lb"><span class="l1">[color][green]-</span><br><span class="l2">asparagus.png</span></div>
</div>
<div class="cell" style="left:756.50px;top:587.00px">
<div class="fr"><div class="sw" style="background:#5DC389"><span class="t1">De York</span><span class="t2">Color</span><span class="v a">93, 195, 137</span><span class="k a">RGB</span><span class="v b">#5DC389</span><span class="k b">HEX</span><span class="v c a">2067-40 De York</span><span class="k c a">Benjamin Moore</span><span class="v c b">PANTONE 7459 C</span><span class="k c b">Pantone</span></div></div>
<div class="lb"><span class="l1" style="letter-spacing:1.17px">[color][green]-de</span><br><span class="l2">york.png</span></div>
</div>
<div class="cell" style="left:902.10px;top:587.00px">
<div class="fr"><div class="sw" style="background:#0B585B"><span class="t1">Deep Sea Green</span><span class="t2">Color</span><span class="v a">11, 88, 91</span><span class="k a">RGB</span><span class="v b">#0B585B</span><span class="k b">HEX</span><span class="v c a">2067-40 Deep Sea Green</span><span class="k c a">Benjamin Moore</span><span class="v c b">PANTONE 7459 C</span><span class="k c b">Pantone</span></div></div>
<div class="lb"><span class="l1">[color][green]-</span><br><span class="l2">deep sea.png</span></div>
</div>
<div class="cell" style="left:1047.10px;top:587.00px">
<div class="fr"><div class="sw" style="background:#283E3A"><span class="t1">Te Papa Green</span><span class="t2">Color</span><span class="v a">40, 62, 58</span><span class="k a">RGB</span><span class="v b">#283E3A</span><span class="k b">HEX</span><span class="v c a">2067-40 Te Papa Green</span><span class="k c a">Benjamin Moore</span><span class="v c b">PANTONE 7459 C</span><span class="k c b">Pantone</span><i style="left:4.2px;top:39.5px"></i><i style="left:29.7px;top:39.5px"></i><i style="left:4.2px;top:56.2px;height:12.5px"></i><i style="left:29.7px;top:56.2px;height:12.5px"></i></div></div>
<div class="lb"><span class="l1">[color][green]-</span><br><span class="l2">hunter.png</span></div>
</div>
</div></div>
<div id="pb">
<svg style="left:15.5px;top:9.7px" width="18" height="12" viewBox="0 0 28.7 19.1"><path d="M4.9 18.4C2.3 18.4 .7 15.9 .7 13.3C.7 10.9 2.1 8.9 3.9 8C3.9 5.7 5.3 3.7 7.5 3.7C8.5 3.7 9.4 3.9 10.1 4.3C11.3 2.1 13.5 .7 16.2 .7C20 .7 23.1 3.9 23.2 8.1C25.9 8.3 28 10.7 28 13.4C28 16.1 26.2 18.4 23.8 18.4Z" fill="#f6f6f6" stroke="#999" stroke-width="1.7"/></svg>
<span style="left:39px">iCloud Drive</span>
<svg style="left:127.4px;top:12.2px" width="6" height="8" viewBox="0 0 6 8"><path d="M1 1L4 3.9L1 6.8" fill="none" stroke="#6c6c6c" stroke-width="1.7" stroke-linecap="round" stroke-linejoin="round"/></svg>
<svg style="left:247.2px;top:12.2px" width="6" height="8" viewBox="0 0 6 8"><path d="M1 1L4 3.9L1 6.8" fill="none" stroke="#6c6c6c" stroke-width="1.7" stroke-linecap="round" stroke-linejoin="round"/></svg>
<svg style="left:346.0px;top:12.2px" width="6" height="8" viewBox="0 0 6 8"><path d="M1 1L4 3.9L1 6.8" fill="none" stroke="#6c6c6c" stroke-width="1.7" stroke-linecap="round" stroke-linejoin="round"/></svg>
<svg style="left:493.0px;top:12.2px" width="6" height="8" viewBox="0 0 6 8"><path d="M1 1L4 3.9L1 6.8" fill="none" stroke="#6c6c6c" stroke-width="1.7" stroke-linecap="round" stroke-linejoin="round"/></svg>
<svg style="left:141.75px;top:8.5px" width="17" height="14" viewBox="0 0 20 16"><path d="M0 1.4Q0 0 1.4 0H5.8Q6.8 0 7.4 .9L8 1.8H18.6Q20 1.8 20 3.2V14.6Q20 16 18.6 16H1.4Q0 16 0 14.6Z" fill="#5ab6f2"/><path d="M0 4.4H20V3.2Q20 1.8 18.6 1.8H8L7.4 .9Q6.8 0 5.8 0H1.4Q0 0 0 1.4Z" fill="#79c9f8"/></svg>
<span style="left:164.75px">Documents</span>
<svg style="left:261.50px;top:8.5px" width="17" height="14" viewBox="0 0 20 16"><path d="M0 1.4Q0 0 1.4 0H5.8Q6.8 0 7.4 .9L8 1.8H18.6Q20 1.8 20 3.2V14.6Q20 16 18.6 16H1.4Q0 16 0 14.6Z" fill="#5ab6f2"/><path d="M0 4.4H20V3.2Q20 1.8 18.6 1.8H8L7.4 .9Q6.8 0 5.8 0H1.4Q0 0 0 1.4Z" fill="#79c9f8"/></svg>
<span style="left:285.50px">2-Photo</span>
<svg style="left:359.75px;top:8.5px" width="17" height="14" viewBox="0 0 20 16"><path d="M0 1.4Q0 0 1.4 0H5.8Q6.8 0 7.4 .9L8 1.8H18.6Q20 1.8 20 3.2V14.6Q20 16 18.6 16H1.4Q0 16 0 14.6Z" fill="#5ab6f2"/><path d="M0 4.4H20V3.2Q20 1.8 18.6 1.8H8L7.4 .9Q6.8 0 5.8 0H1.4Q0 0 0 1.4Z" fill="#79c9f8"/></svg>
<span style="left:383.50px">Graphic Design</span>
<svg style="left:506.75px;top:8.5px" width="17" height="14" viewBox="0 0 20 16"><path d="M0 1.4Q0 0 1.4 0H5.8Q6.8 0 7.4 .9L8 1.8H18.6Q20 1.8 20 3.2V14.6Q20 16 18.6 16H1.4Q0 16 0 14.6Z" fill="#5ab6f2"/><path d="M0 4.4H20V3.2Q20 1.8 18.6 1.8H8L7.4 .9Q6.8 0 5.8 0H1.4Q0 0 0 1.4Z" fill="#79c9f8"/></svg>
<span style="left:530.40px">Colors</span>
</div>
</div>
</body>
</html>
